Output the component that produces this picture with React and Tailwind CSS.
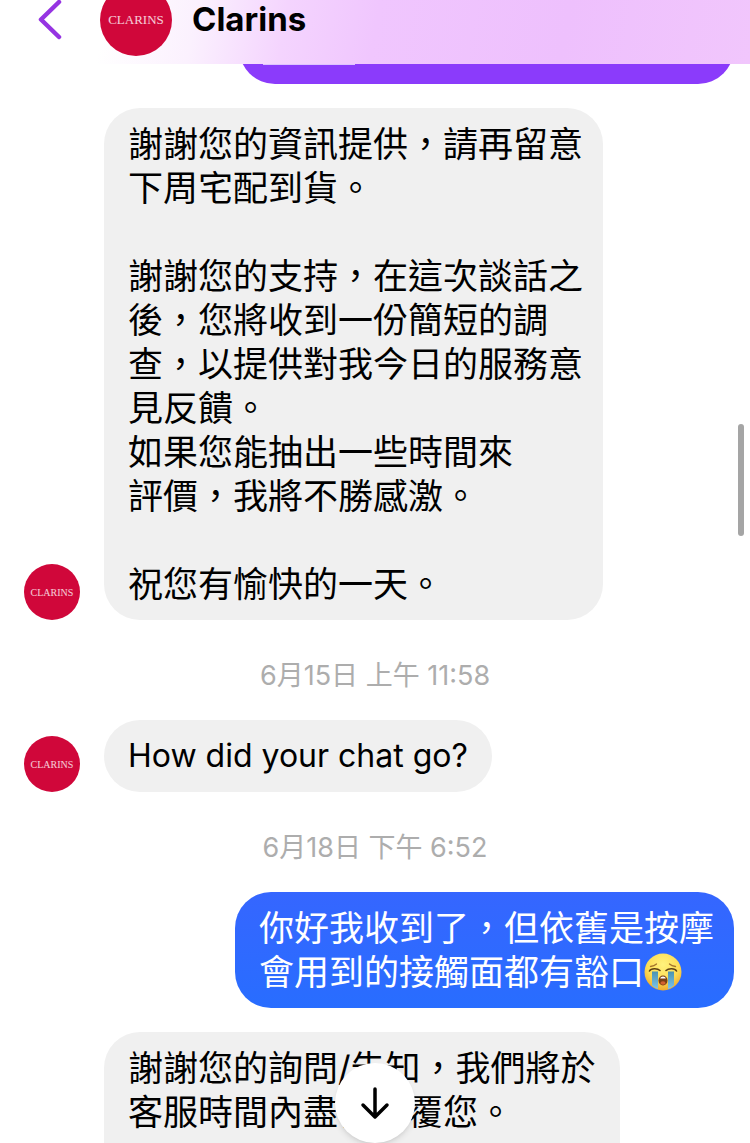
import React from 'react'

const Avatar = ({ large = false }) => (
  <div
    className={`flex shrink-0 items-center justify-center rounded-full bg-[#d0073a] text-white/80 font-['Liberation_Serif',serif] ${
      large ? 'size-18 text-[13px]' : 'size-14 text-[10px]'
    }`}
  >
    CLARINS
  </div>
)

const CryingFace = () => (
  <svg viewBox="0 0 38 38" className="size-[38px]" role="img" aria-label="Loudly crying face">
    <defs>
      <radialGradient id="face" cx="50%" cy="30%" r="72%">
        <stop offset="0" stopColor="#fff27d" />
        <stop offset="0.6" stopColor="#fddc55" />
        <stop offset="1" stopColor="#eda62a" />
      </radialGradient>
      <linearGradient id="tear" x1="0" y1="0" x2="0" y2="1">
        <stop offset="0" stopColor="#4b93b0" />
        <stop offset="1" stopColor="#7cc4ec" />
      </linearGradient>
    </defs>
    <circle cx="19" cy="19" r="18.5" fill="url(#face)" />
    <path d="M6.500 13.500c2.500-.2 4.500-1 6-2.500M31.500 13.500c-2.500-.2-4.500-1-6-2.500" stroke="#a5742c" strokeWidth="1.300" fill="none" strokeLinecap="round" />
    <path d="M8 18.500h6v17.500c-2.300-.8-4.300-2-6-3.800zM24 18.500h6v13.700c-1.700 1.800-3.700 3-6 3.800z" fill="url(#tear)" />
    <path d="M5.500 18c1.500-3 8-3 10.500-.5M32.500 18c-1.500-3-8-3-10.500-.5" stroke="#5f4114" strokeWidth="1.600" fill="none" strokeLinecap="round" />
    <ellipse cx="19" cy="27.500" rx="4.500" ry="5" fill="#7a3f14" />
    <path d="M16.200 25.500c.3-2.800 5.300-2.800 5.600 0z" fill="#fff" />
    <ellipse cx="19" cy="30" rx="2.600" ry="1.800" fill="#d2612f" />
  </svg>
)

const Timestamp = ({ children }) => (
  <p className="pt-10 pb-7 text-center text-[27px] leading-8 text-[#adadad]">{children}</p>
)

const Received = ({ children, className }) => (
  <div
    className={`rounded-[36px] bg-[#f0f0f0] pt-[14px] pl-6 leading-11 whitespace-pre-line text-black ${className}`}
  >
    {children}
  </div>
)

const thanks = `謝謝您的資訊提供，請再留意
下周宅配到貨。

謝謝您的支持，在這次談話之
後，您將收到一份簡短的調
查，以提供對我今日的服務意
見反饋。
如果您能抽出一些時間來
評價，我將不勝感激。

祝您有愉快的一天。`

const reply = `謝謝您的詢問/告知，我們將於
客服時間內盡快回覆您。`

const App = () => {
  return (
    <div
      lang="zh-Hant"
      className="relative flex h-screen flex-col overflow-hidden bg-white font-['Inter','Noto_Sans_CJK_TC',sans-serif]"
    >
      <header className="z-10 flex h-16 shrink-0 items-end bg-[linear-gradient(100deg,#fff_14%,#fbf1fe_26%,#f4d4fe_38%,#f0c6fe_50%,#eec0fd_75%,#f1c6fc_100%)] pb-2 pl-9">
        <div className="flex h-18 items-center">
          <button type="button" aria-label="Back" className="w-16">
            <svg viewBox="0 0 28 44" className="h-11 w-7" fill="none">
              <path d="M23 4L5 21.500L23 39" stroke="#9634e2" strokeWidth="4.500" strokeLinecap="round" strokeLinejoin="round" />
            </svg>
          </button>
          <Avatar large />
          <h1 className="ml-5 text-[33px] font-bold text-black">Clarins</h1>
        </div>
      </header>

      <main className="flex-1 overflow-hidden">
        {/* tail of the previous message, scrolled under the header */}
        <div className="-mt-13 mb-6 flex justify-end pr-4">
          <div className="h-18 w-[495px] rounded-[36px] bg-[#8b3bfb] px-6 pt-13">
            <div className="h-px w-23 bg-white/70" />
          </div>
        </div>

        <div className="flex items-end gap-6 pl-6">
          <Avatar />
          <Received className="pr-5 pb-[14px] text-[35px]">{thanks}</Received>
        </div>

        <Timestamp>6月15日 上午 11:58</Timestamp>

        <div className="flex items-end gap-6 pl-6">
          <Avatar />
          <Received className="pr-6 pb-[14px] text-[32px]">How did your chat go?</Received>
        </div>

        <Timestamp>6月18日 下午 6:52</Timestamp>

        <div className="mb-6 flex justify-end pr-4">
          <div className="rounded-[36px] bg-linear-to-b from-[#3566ff] to-[#286dff] py-[14px] pl-6 pr-5 text-[35px] leading-11 text-white">
            <p>你好我收到了，但依舊是按摩</p>
            <p className="flex items-center">
              會用到的接觸面都有豁口
              <CryingFace />
            </p>
          </div>
        </div>

        {/* runs on past the bottom of the screen */}
        <div className="flex pl-26">
          <Received className="pr-6 pb-24 text-[35px]">{reply}</Received>
        </div>
      </main>

      <div className="absolute top-106 right-1.5 h-28 w-1.5 rounded-full bg-[#a5a5a5]" />

      <button
        type="button"
        aria-label="Scroll to latest"
        className="absolute bottom-0 left-1/2 flex size-20 -translate-x-1/2 items-center justify-center rounded-full bg-white shadow-md"
      >
        <svg viewBox="0 0 32 36" className="h-9 w-8" fill="none" stroke="#000" strokeWidth="3.500" strokeLinecap="round" strokeLinejoin="round">
          <path d="M16 4v27M4 20l12 12 12-12" />
        </svg>
      </button>
    </div>
  )
}

export default App
